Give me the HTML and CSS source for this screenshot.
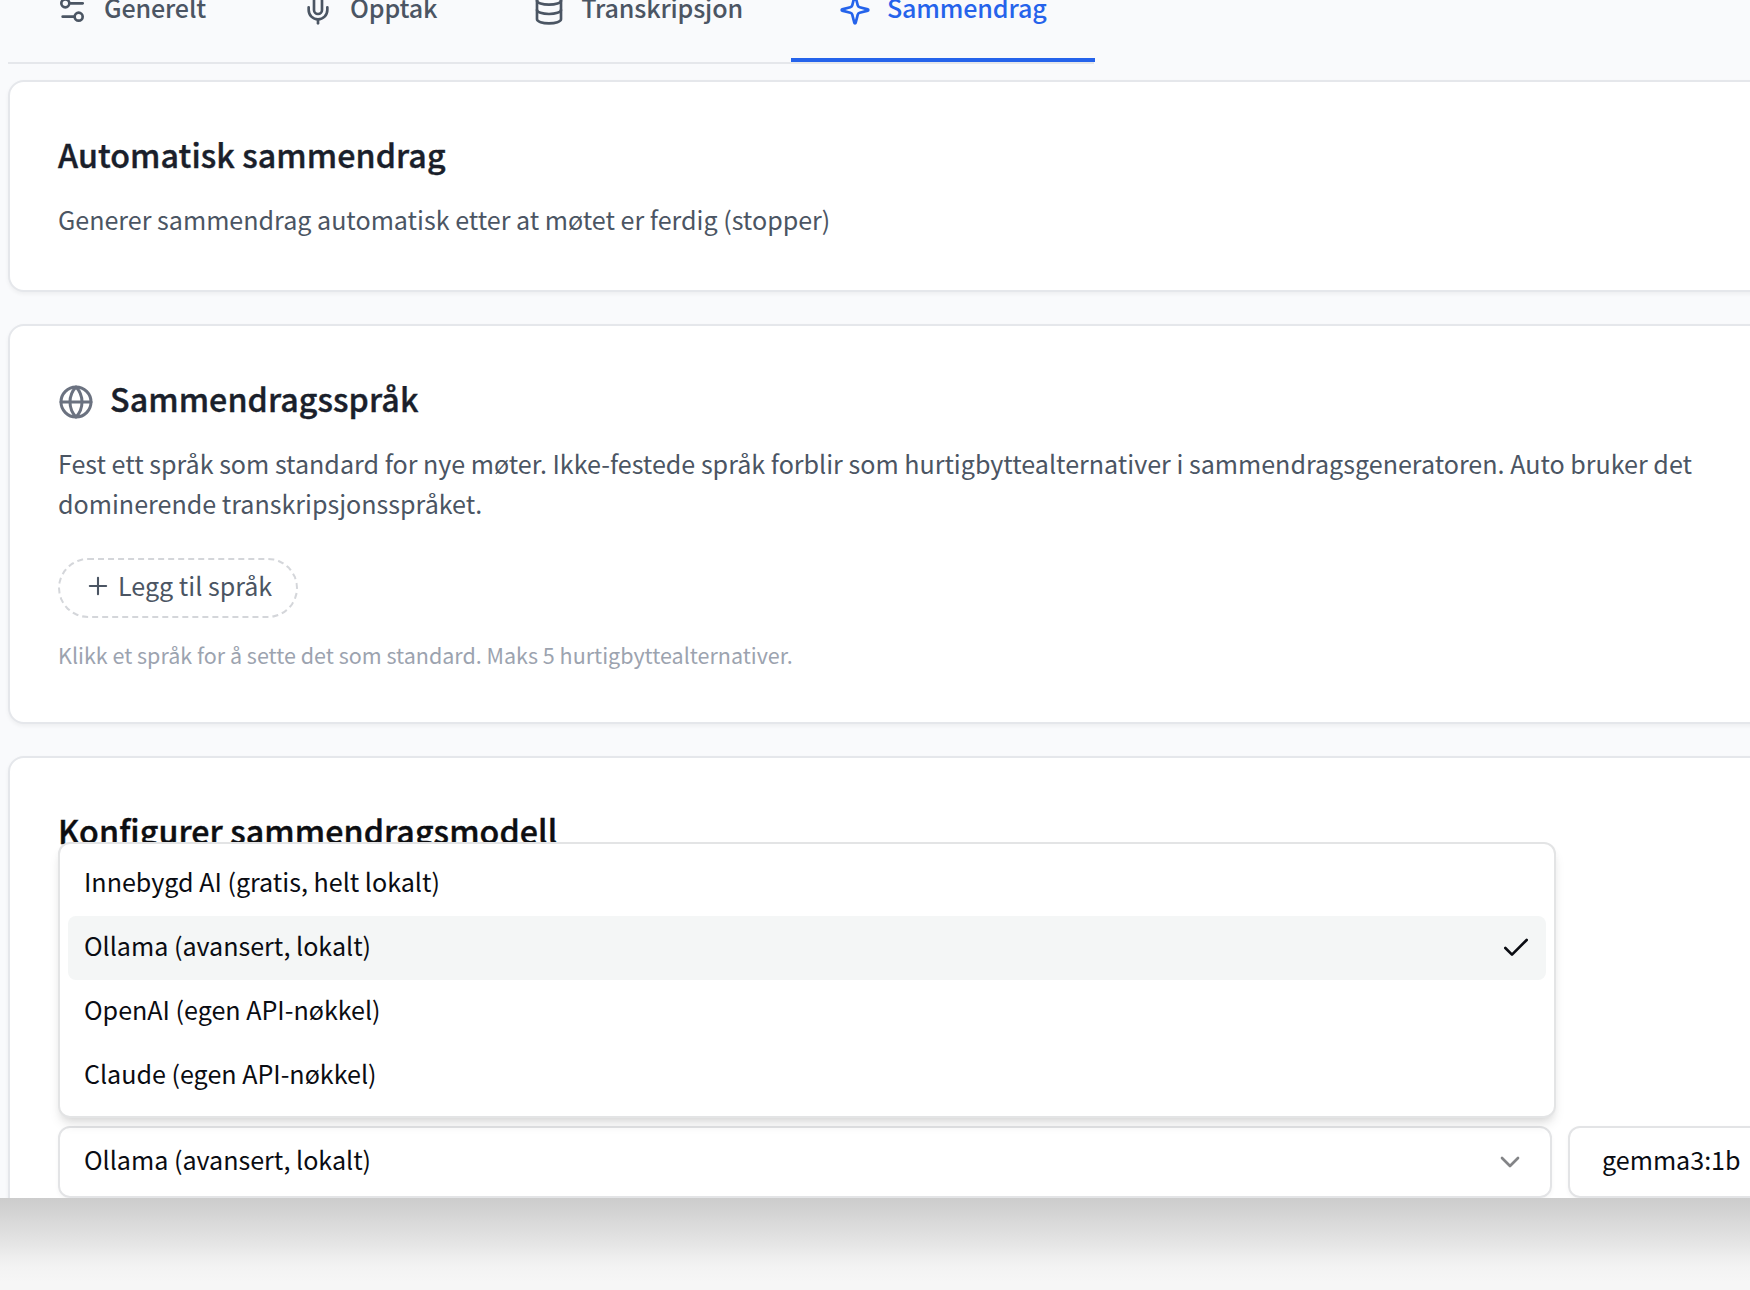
FILE: index.html
```html
<!DOCTYPE html>
<html lang="nb">
<head>
    <meta charset="UTF-8">
    <meta name="viewport" content="width=device-width, initial-scale=1.0">
    <title>Innstillinger</title>
    <link rel="stylesheet" href="styles.css">
</head>
<body>
    <main class="window">
        <nav class="tabs">
            <a class="tab">
                <svg class="icon" viewBox="0 0 24 24"><path d="M20 7h-9"/><path d="M14 17H5"/><circle cx="17" cy="17" r="3"/><circle cx="7" cy="7" r="3"/></svg>
                <span>Generelt</span>
            </a>
            <a class="tab">
                <svg class="icon" viewBox="0 0 24 24"><path d="M12 2a3 3 0 0 0-3 3v7a3 3 0 0 0 6 0V5a3 3 0 0 0-3-3Z"/><path d="M19 10v2a7 7 0 0 1-14 0v-2"/><path d="M12 19v3"/></svg>
                <span>Opptak</span>
            </a>
            <a class="tab">
                <svg class="icon" viewBox="0 0 24 24"><ellipse cx="12" cy="5" rx="9" ry="3"/><path d="M3 5v14a9 3 0 0 0 18 0V5"/><path d="M3 12a9 3 0 0 0 18 0"/></svg>
                <span>Transkripsjon</span>
            </a>
            <a class="tab active">
                <svg class="icon" viewBox="0 0 24 24"><path d="M9.937 15.5A2 2 0 0 0 8.5 14.063l-6.135-1.582a.5.5 0 0 1 0-.962L8.5 9.936A2 2 0 0 0 9.937 8.5l1.582-6.135a.5.5 0 0 1 .963 0L14.063 8.5A2 2 0 0 0 15.5 9.937l6.135 1.581a.5.5 0 0 1 0 .964L15.5 14.063a2 2 0 0 0-1.437 1.437l-1.582 6.135a.5.5 0 0 1-.963 0z"/></svg>
                <span>Sammendrag</span>
            </a>
        </nav>

        <section class="card">
            <h3>Automatisk sammendrag</h3>
            <p class="description">Generer sammendrag automatisk etter at møtet er ferdig (stopper)</p>
        </section>

        <section class="card">
            <div class="card-title">
                <svg class="icon globe" viewBox="0 0 24 24"><circle cx="12" cy="12" r="10"/><path d="M12 2a14.5 14.5 0 0 0 0 20 14.5 14.5 0 0 0 0-20"/><path d="M2 12h20"/></svg>
                <h3>Sammendragsspråk</h3>
            </div>
            <p class="description">Fest ett språk som standard for nye møter. Ikke-festede språk forblir som hurtigbyttealternativer i sammendragsgeneratoren. Auto bruker det dominerende transkripsjonsspråket.</p>
            <button class="add-button">
                <svg class="icon plus" viewBox="0 0 24 24"><path d="M5 12h14"/><path d="M12 5v14"/></svg>
                <span>Legg til språk</span>
            </button>
            <p class="hint">Klikk et språk for å sette det som standard. Maks 5 hurtigbyttealternativer.</p>
        </section>

        <section class="card model">
            <h3>Konfigurer sammendragsmodell</h3>
            <div class="model-row">
                <div class="select provider">
                    <span>Ollama (avansert, lokalt)</span>
                    <svg class="icon chevron" viewBox="0 0 24 24"><path d="m6 9 6 6 6-6"/></svg>
                    <ul class="menu">
                        <li>Innebygd AI (gratis, helt lokalt)</li>
                        <li class="selected">
                            Ollama (avansert, lokalt)
                            <svg class="icon check" viewBox="0 0 24 24"><path d="M20 6 9 17l-5-5"/></svg>
                        </li>
                        <li>OpenAI (egen API-nøkkel)</li>
                        <li>Claude (egen API-nøkkel)</li>
                    </ul>
                </div>
                <div class="select model-name">
                    <span>gemma3:1b</span>
                </div>
            </div>
        </section>
    </main>
    <div class="window-shadow"></div>
</body>
</html>
```

FILE: styles.css
```css
* {
    box-sizing: border-box;
}

body {
    margin: 0;
    height: 1290px;
    overflow: hidden;
    background-color: #f5f5f5;
    font-family: "Noto Sans CJK SC", "Noto Sans", sans-serif;
    font-size: 25.08px;
    line-height: 40px;
    color: #0a0c12;
}

h3, p, ul {
    margin: 0;
    padding: 0;
}

.window {
    height: 1198px;
    padding-left: 8px;
    overflow: hidden;
    background-color: #f9fafc;
}

.window-shadow {
    height: 92px;
    background: linear-gradient(#cccccc 0, #d1d1d1 10px, #d9d9d9 24px, #e4e4e4 44px, #ededed 58px, #f3f3f3 70px, #f6f6f6 84px);
}

.icon {
    flex-shrink: 0;
    width: 32px;
    height: 32px;
    fill: none;
    stroke: currentColor;
    stroke-width: 2;
    stroke-linecap: round;
    stroke-linejoin: round;
}

/* tabs */
.tabs {
    display: flex;
    width: 1086px;
    height: 112px;
    margin-top: -48px;
    margin-bottom: 16px;
    border-bottom: 2px solid #e5e7eb;
}

.tab {
    display: flex;
    flex-shrink: 0;
    align-items: center;
    gap: 16px;
    padding: 4px 48px 0;
    border-bottom: 4px solid transparent;
    color: #4b5563;
    font-weight: 500;
    letter-spacing: -0.15px;
}

.tab .icon {
    margin-top: 6px;
}

.tab.active {
    color: #2563eb;
    border-bottom-color: #2563eb;
}

/* cards */
.card {
    width: 1842px;
    margin-bottom: 32px;
    padding: 48px 48px 51px;
    background-color: #fff;
    border: 2px solid #e5e7eb;
    border-radius: 16px;
    box-shadow: 0 2px 4px rgba(0, 0, 0, 0.05);
}

.card h3 {
    font-size: 32.2px;
    line-height: 48px;
    font-weight: 500;
    letter-spacing: 0.08px;
    color: #1a1f2b;
    -webkit-text-stroke: 0.4px currentColor;
}

.card-title {
    display: flex;
    align-items: center;
    gap: 16px;
    height: 48px;
}

.globe {
    width: 36px;
    height: 36px;
    margin-top: 8px;
    color: #6b7280;
}

.description {
    width: 1650px;
    margin-top: 21px;
    color: #4b5563;
}

.add-button {
    display: flex;
    align-items: center;
    gap: 6px;
    height: 60px;
    margin-top: 35px;
    padding: 5px 24px 11px;
    background: none;
    border: 2px dashed #d4d6da;
    border-radius: 30px;
    color: #4b5563;
    font: inherit;
}

.plus {
    width: 28px;
    height: 28px;
    margin-top: 2px;
    stroke-width: 1.8;
}

.hint {
    margin-top: 21px;
    font-size: 21.5px;
    line-height: 32px;
    color: #9ca3af;
}

/* model picker */
.card.model {
    height: 600px;
}

.model h3 {
    color: #0d0e11;
}

.model-row {
    display: flex;
    gap: 16px;
    margin-top: 272px;
}

.select {
    position: relative;
    display: flex;
    flex-shrink: 0;
    justify-content: space-between;
    height: 72px;
    padding: 11px 24px 17px;
    border: 2px solid #e3e4e6;
    border-radius: 12px;
    box-shadow: 0 2px 4px rgba(0, 0, 0, 0.04);
}

.provider {
    width: 1494px;
}

.model-name {
    width: 300px;
    padding-left: 32px;
}

.chevron {
    margin-top: 7px;
    opacity: 0.5;
}

.menu {
    position: absolute;
    left: -2px;
    bottom: 78px;
    width: 1498px;
    padding: 8px;
    list-style: none;
    background-color: #fff;
    border: 2px solid #e3e4e5;
    border-radius: 12px;
    box-shadow: 0 8px 12px -2px rgba(0, 0, 0, 0.1), 0 4px 8px -4px rgba(0, 0, 0, 0.1);
}

.menu li {
    display: flex;
    justify-content: space-between;
    height: 64px;
    padding: 9px 14px 15px 16px;
    border-radius: 8px;
}

.menu .selected {
    background-color: #f4f6f6;
}

.check {
    margin-top: 7px;
}
```
